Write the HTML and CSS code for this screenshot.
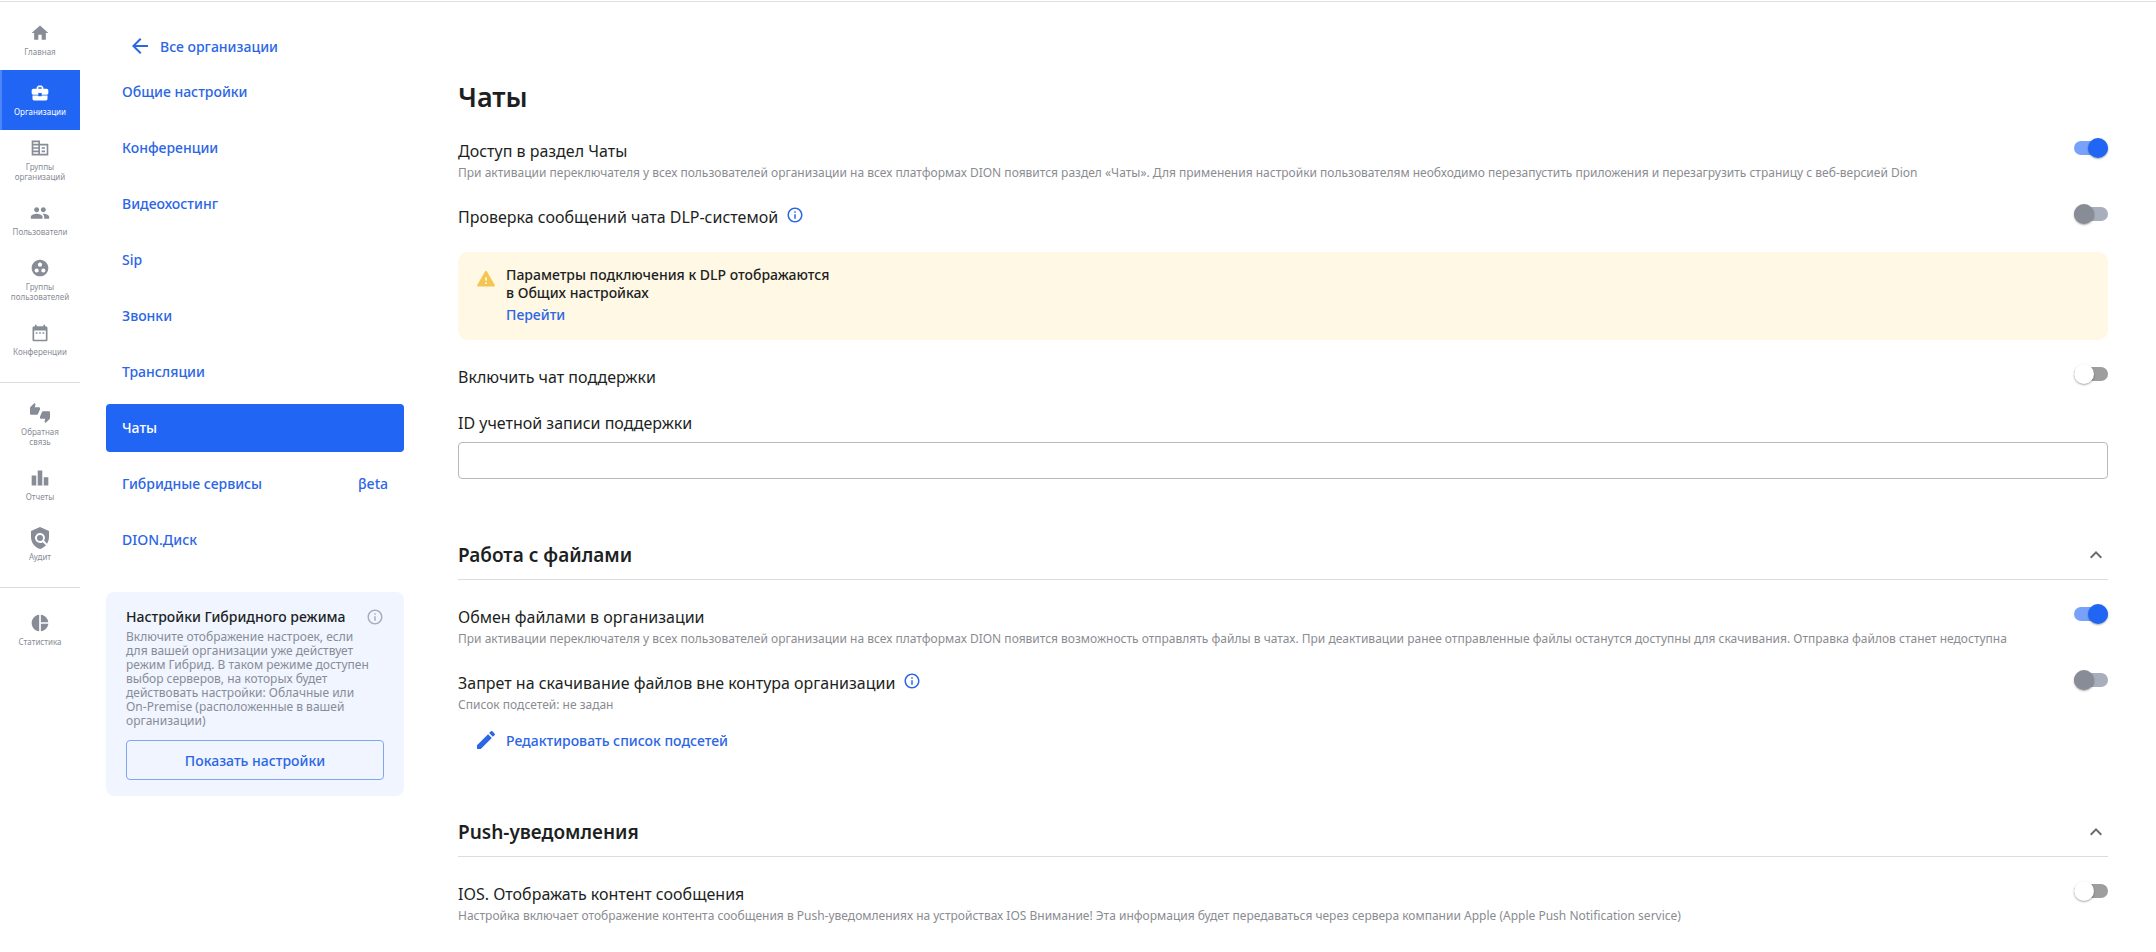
FILE: index.html
```html
<!DOCTYPE html>
<html lang="ru">
<head>
<meta charset="utf-8">
<meta name="viewport" content="width=device-width, initial-scale=1">
<title>Чаты</title>
<link rel="stylesheet" href="styles.css">
</head>
<body>
<svg class="sprite" aria-hidden="true">
  <symbol id="i-info" viewBox="0 0 24 24"><path d="M11 7h2v2h-2zm0 4h2v6h-2zm1-9C6.48 2 2 6.48 2 12s4.480 10 10 10 10-4.480 10-10S17.520 2 12 2zm0 18c-4.410 0-8-3.590-8-8s3.590-8 8-8 8 3.590 8 8-3.590 8-8 8z"/></symbol>
  <symbol id="i-up" viewBox="0 0 24 24"><path d="M12 8l-6 6 1.410 1.410L12 10.830l4.590 4.580L18 14z"/></symbol>
</svg>
<div class="app">
  <nav class="rail" aria-label="Разделы">
    <a class="rail-item" href="#"><svg class="rail-icon" viewBox="0 0 24 24"><path d="M10 20v-6h4v6h5v-8h3L12 3 2 12h3v8z"/></svg><span>Главная</span></a>
    <a class="rail-item active" href="#"><svg class="rail-icon" viewBox="0 0 24 24"><path d="M10 16v-1H3.010L3 19c0 1.110.89 2 2 2h14c1.110 0 2-.89 2-2v-4h-7v1h-4zm10-9h-4.010V5l-2-2h-4l-2 2v2H4c-1.100 0-2 .9-2 2v3c0 1.110.89 2 2 2h6v-2h4v2h6c1.100 0 2-.9 2-2V9c0-1.100-.9-2-2-2zm-6 0h-4V5h4v2z"/></svg><span>Организации</span></a>
    <a class="rail-item" href="#"><svg class="rail-icon" viewBox="0 0 24 24"><path d="M12 7V3H2v18h20V7H12zM10 19H4v-2h6v2zm0-4H4v-2h6v2zm0-4H4V9h6v2zm0-4H4V5h6v2zm10 12h-8V9h8v10zm-2-8h-4v2h4v-2zm0 4h-4v2h4v-2z"/></svg><span>Группы организаций</span></a>
    <a class="rail-item" href="#"><svg class="rail-icon" viewBox="0 0 24 24"><path d="M16 11c1.660 0 2.990-1.340 2.990-3S17.660 5 16 5s-3 1.340-3 3 1.340 3 3 3zm-8 0c1.660 0 2.990-1.340 2.990-3S9.660 5 8 5 5 6.340 5 8s1.340 3 3 3zm0 2c-2.330 0-7 1.170-7 3.500V19h14v-2.500C15 14.170 10.330 13 8 13zm8 0c-.29 0-.62.02-.97.05 1.160.84 1.970 1.970 1.970 3.450V19h6v-2.500c0-2.330-4.670-3.500-7-3.500z"/></svg><span>Пользователи</span></a>
    <a class="rail-item" href="#"><svg class="rail-icon" viewBox="0 0 24 24"><path d="M12 2C6.480 2 2 6.480 2 12s4.480 10 10 10 10-4.480 10-10S17.520 2 12 2zM8 17.500a2.500 2.500 0 1 1 0-5 2.500 2.500 0 0 1 0 5zM9.500 8a2.500 2.500 0 1 1 5 0 2.500 2.500 0 0 1-5 0zm6.500 9.500a2.500 2.500 0 1 1 0-5 2.500 2.500 0 0 1 0 5z"/></svg><span>Группы пользователей</span></a>
    <a class="rail-item" href="#"><svg class="rail-icon" viewBox="0 0 24 24"><path d="M9 11H7v2h2v-2zm4 0h-2v2h2v-2zm4 0h-2v2h2v-2zm2-7h-1V2h-2v2H8V2H6v2H5c-1.110 0-1.990.9-1.990 2L3 20c0 1.100.89 2 2 2h14c1.100 0 2-.9 2-2V6c0-1.100-.9-2-2-2zm0 16H5V9h14v11z"/></svg><span>Конференции</span></a>
    <hr class="rail-line">
    <a class="rail-item" href="#"><svg class="rail-icon" viewBox="0 0 24 24"><path d="M12 6c0-.55-.45-1-1-1H5.820l.66-3.180.02-.23c0-.31-.13-.59-.33-.8L5.380 0 .44 4.940C.17 5.210 0 5.590 0 6v6.500c0 .83.67 1.500 1.500 1.500h6.750c.62 0 1.150-.38 1.380-.91l2.260-5.290c.07-.17.110-.36.110-.55V6zm10.500 4h-6.750c-.62 0-1.150.38-1.380.91l-2.260 5.290c-.07.17-.110.36-.110.55V18c0 .55.45 1 1 1h5.180l-.66 3.180-.02.24c0 .31.13.59.33.8l.79.78 4.940-4.940c.27-.27.44-.65.44-1.060v-6.500c0-.83-.67-1.500-1.500-1.500z"/></svg><span>Обратная<br>связь</span></a>
    <a class="rail-item" href="#"><svg class="rail-icon" viewBox="0 0 24 24"><path d="M2 9h5.500v12H2zM9.250 3h5.500v18h-5.500zM16.500 11H22v10h-5.500z"/></svg><span>Отчеты</span></a>
    <a class="rail-item" href="#"><svg class="rail-icon" viewBox="2 2 20 20"><path d="M21 5l-9-4-9 4v6c0 5.550 3.840 10.740 9 12 2.300-.56 4.330-1.900 5.880-3.710l-3.120-3.120a5 5 0 1 1 1.410-1.410l2.900 2.900C20.290 15.690 21 13.380 21 11z"/><circle cx="12" cy="12" r="3"/></svg><span>Аудит</span></a>
    <hr class="rail-line">
    <a class="rail-item" href="#"><svg class="rail-icon" viewBox="0 0 24 24"><path d="M11 2v20c-5.070-.5-9-4.790-9-10s3.930-9.500 9-10zm2.030 0v8.990H22c-.47-4.740-4.240-8.520-8.970-8.990zm0 11.010V22c4.740-.47 8.500-4.250 8.970-8.990h-8.970z"/></svg><span>Статистика</span></a>
  </nav>

  <aside class="side">
    <a class="back" href="#"><svg class="icon" viewBox="0 0 24 24"><path d="M20 11H7.830l5.590-5.590L12 4l-8 8 8 8 1.410-1.410L7.830 13H20v-2z"/></svg>Все организации</a>
    <nav class="menu" aria-label="Настройки организации">
      <a class="menu-item" href="#">Общие настройки</a>
      <a class="menu-item" href="#">Конференции</a>
      <a class="menu-item" href="#">Видеохостинг</a>
      <a class="menu-item" href="#">Sip</a>
      <a class="menu-item" href="#">Звонки</a>
      <a class="menu-item" href="#">Трансляции</a>
      <a class="menu-item active" href="#" aria-current="page">Чаты</a>
      <a class="menu-item" href="#">Гибридные сервисы<span>βeta</span></a>
      <a class="menu-item" href="#">DION.Диск</a>
    </nav>
    <section class="card">
      <div class="card-head"><h2 class="card-title">Настройки Гибридного режима</h2><svg class="icon-info muted"><use href="#i-info"/></svg></div>
      <p class="card-text">Включите отображение настроек, если для вашей организации уже действует режим Гибрид. В таком режиме доступен выбор серверов, на которых будет действовать настройки: Облачные или On-Premise (расположенные в вашей организации)</p>
      <button class="card-button" type="button">Показать настройки</button>
    </section>
  </aside>

  <main class="main">
    <h1 class="title">Чаты</h1>
    <div class="setting">
      <div><label class="label" for="access">Доступ в раздел Чаты</label>
      <p class="desc">При активации переключателя у всех пользователей организации на всех платформах DION появится раздел «Чаты». Для применения настройки пользователям необходимо перезапустить приложения и перезагрузить страницу с веб-версией Dion</p></div>
      <input class="switch" type="checkbox" role="switch" id="access" checked>
    </div>
    <div class="setting">
      <div class="label-line"><label class="label" for="dlp">Проверка сообщений чата DLP-системой</label><svg class="icon-info"><use href="#i-info"/></svg></div>
      <input class="switch" type="checkbox" role="switch" id="dlp" disabled>
    </div>
    <div class="notice">
      <svg class="icon warn" viewBox="0 0 24 24"><path d="M2.500 21h19c.9 0 1.400-.9 1-1.700L13 2.800c-.5-.8-1.500-.8-2 0L1.500 19.300c-.4.8.1 1.700 1 1.700zM13 18h-2v-2h2v2zm0-4h-2v-4h2v4z"/></svg>
      <div class="notice-body">
        <p class="notice-text">Параметры подключения к DLP отображаются<br>в Общих настройках</p>
        <a class="notice-link" href="#">Перейти</a>
      </div>
    </div>
    <div class="setting">
      <label class="label" for="support">Включить чат поддержки</label>
      <input class="switch" type="checkbox" role="switch" id="support">
    </div>
    <div class="field">
      <label class="label" for="support-id">ID учетной записи поддержки</label>
      <input class="input" type="text" id="support-id">
    </div>

    <section class="section">
      <button class="section-head" type="button" aria-expanded="true"><span>Работа с файлами</span><svg class="icon chevron"><use href="#i-up"/></svg></button>
      <div class="setting">
        <div><label class="label" for="files">Обмен файлами в организации</label>
        <p class="desc">При активации переключателя у всех пользователей организации на всех платформах DION появится возможность отправлять файлы в чатах. При деактивации ранее отправленные файлы останутся доступны для скачивания. Отправка файлов станет недоступна</p></div>
        <input class="switch" type="checkbox" role="switch" id="files" checked>
      </div>
      <div class="setting">
        <div><div class="label-line"><label class="label" for="deny">Запрет на скачивание файлов вне контура организации</label><svg class="icon-info"><use href="#i-info"/></svg></div>
        <p class="desc">Список подсетей: не задан</p></div>
        <input class="switch" type="checkbox" role="switch" id="deny" disabled>
      </div>
      <button class="edit" type="button"><svg class="icon" viewBox="0 0 24 24"><path d="M3 17.250V21h3.750L17.810 9.940l-3.750-3.750L3 17.250zM20.710 7.040c.39-.39.39-1.020 0-1.410l-2.340-2.340c-.39-.39-1.020-.39-1.410 0l-1.830 1.830 3.750 3.750 1.830-1.830z"/></svg>Редактировать список подсетей</button>
    </section>

    <section class="section">
      <button class="section-head" type="button" aria-expanded="true"><span>Push-уведомления</span><svg class="icon chevron"><use href="#i-up"/></svg></button>
      <div class="setting">
        <div><label class="label" for="ios">IOS. Отображать контент сообщения</label>
        <p class="desc">Настройка включает отображение контента сообщения в Push-уведомлениях на устройствах IOS Внимание! Эта информация будет передаваться через сервера компании Apple (Apple Push Notification service)</p></div>
        <input class="switch" type="checkbox" role="switch" id="ios">
      </div>
    </section>
  </main>
</div>
</body>
</html>
```
FILE: styles.css
```css
* { box-sizing: border-box; }
body {
  margin: 0;
  padding-top: 1px;
  background: #fff;
  color: #1d1f23;
  font-family: "Noto Sans", "Open Sans", sans-serif;
  font-size: 14px;
}
h1, h2, p { margin: 0; }
a { text-decoration: none; }
button { font: inherit; cursor: pointer; }
svg { flex: none; fill: currentColor; }
.sprite { display: none; }
.icon { width: 24px; height: 24px; }
.icon-info { width: 18px; height: 18px; color: #2b66e4; }
.icon-info.muted { color: #a8aebb; }

.app {
  display: grid;
  grid-template-columns: 80px 298px minmax(0, 1fr);
  border-top: 1px solid #e1e1e1;
}

.rail { padding-top: 8px; }
.rail-item {
  display: flex;
  flex-direction: column;
  align-items: center;
  justify-content: center;
  gap: 4px;
  height: 60px;
  color: #878c96;
  font-size: 8px;
  line-height: 10px;
  text-align: center;
}
.rail-item.active {
  background: #2165f5;
  border-left: 2px solid #4d86f9;
  padding-right: 2px;
  color: #fff;
}
.rail-icon { width: 20px; height: 20px; overflow: visible; }
.rail-line { margin: 12px 0; border: 0; border-top: 1px solid #dcdcdc; }

.side { margin-left: 26px; margin-right: -26px; padding-top: 32px; }
.back {
  display: flex;
  align-items: center;
  gap: 8px;
  margin-left: 22px;
  color: #2b66e4;
  font-weight: 500;
}
.menu { display: grid; gap: 8px; margin-top: 10px; }
.menu-item {
  display: flex;
  align-items: center;
  justify-content: space-between;
  height: 48px;
  padding: 0 16px 2px;
  border-radius: 4px;
  color: #2b66e4;
  font-weight: 500;
}
.menu-item.active { background: #2165f5; color: #fff; }

.card {
  margin-top: 28px;
  padding: 16px 20px;
  border-radius: 8px;
  background: #f0f5ff;
}
.card-head { display: flex; align-items: center; justify-content: space-between; }
.card-title { font-size: 14px; line-height: 18px; font-weight: 500; }
.card-text {
  margin-top: 4px;
  padding-right: 8px;
  color: #878c96;
  font-size: 12px;
  line-height: 14px;
}
.card-button {
  width: 100%;
  height: 40px;
  margin-top: 12px;
  border: 1px solid #82a6ee;
  border-radius: 4px;
  background: transparent;
  color: #2b66e4;
  font-weight: 500;
}

.main { padding: 75px 48px 0 80px; }
.title { font-size: 27px; line-height: 40px; font-weight: 600; }
.setting {
  display: flex;
  align-items: flex-start;
  justify-content: space-between;
  margin-top: 22px;
}
.title + .setting { margin-top: 21px; }
.label { display: block; font-size: 16px; line-height: 26px; }
.label-line { display: flex; align-items: flex-start; gap: 8px; }
.label-line .icon-info { margin-top: 2px; }
.desc { color: #8a8c91; font-size: 12px; line-height: 18px; }
.switch {
  appearance: none;
  position: relative;
  flex: none;
  width: 34px;
  height: 14px;
  margin: 3px 0 0;
  border-radius: 7px;
  background: #9e9e9e;
}
.switch::before {
  content: "";
  position: absolute;
  top: -3px;
  left: 0;
  width: 20px;
  height: 20px;
  border-radius: 50%;
  background: #fff;
  box-shadow: 0 1px 2px rgba(0, 0, 0, 0.35);
}
.switch:checked { background: #78a2f9; }
.switch:checked::before { left: 14px; background: #2165f5; }
.switch:disabled { background: #a8aebb; }
.switch:disabled::before { background: #878c96; }

.notice {
  display: flex;
  gap: 8px;
  margin: 22px 0 24px;
  padding: 14px 16px 16px;
  border-radius: 10px;
  background: #fff8e5;
}
.icon.warn { width: 20px; height: 20px; margin: 3px 2px; color: #f4c651; }
.notice-text { line-height: 18px; font-weight: 500; }
.notice-link { display: block; margin-top: 4px; color: #2b66e4; line-height: 18px; font-weight: 500; }

.field { margin-top: 20px; }
.input {
  display: block;
  width: 100%;
  height: 37px;
  margin-top: 6px;
  padding: 0 12px;
  border: 1px solid #b9b9b9;
  border-radius: 4px;
  font: inherit;
}

.section { margin-top: 56px; }
.section-head {
  display: flex;
  align-items: center;
  justify-content: space-between;
  width: 100%;
  padding: 4px 0 8px;
  border: 0;
  border-bottom: 1px solid #dcdcdc;
  background: none;
  color: inherit;
  font-size: 19px;
  line-height: 32px;
  font-weight: 600;
}
.section-head + .setting { margin-top: 24px; }
.chevron { color: #6b6b6b; }
.edit {
  display: flex;
  align-items: center;
  gap: 8px;
  height: 32px;
  margin: 10px 0 0 16px;
  padding: 0;
  border: 0;
  background: none;
  color: #2b66e4;
  font-weight: 500;
}
```
